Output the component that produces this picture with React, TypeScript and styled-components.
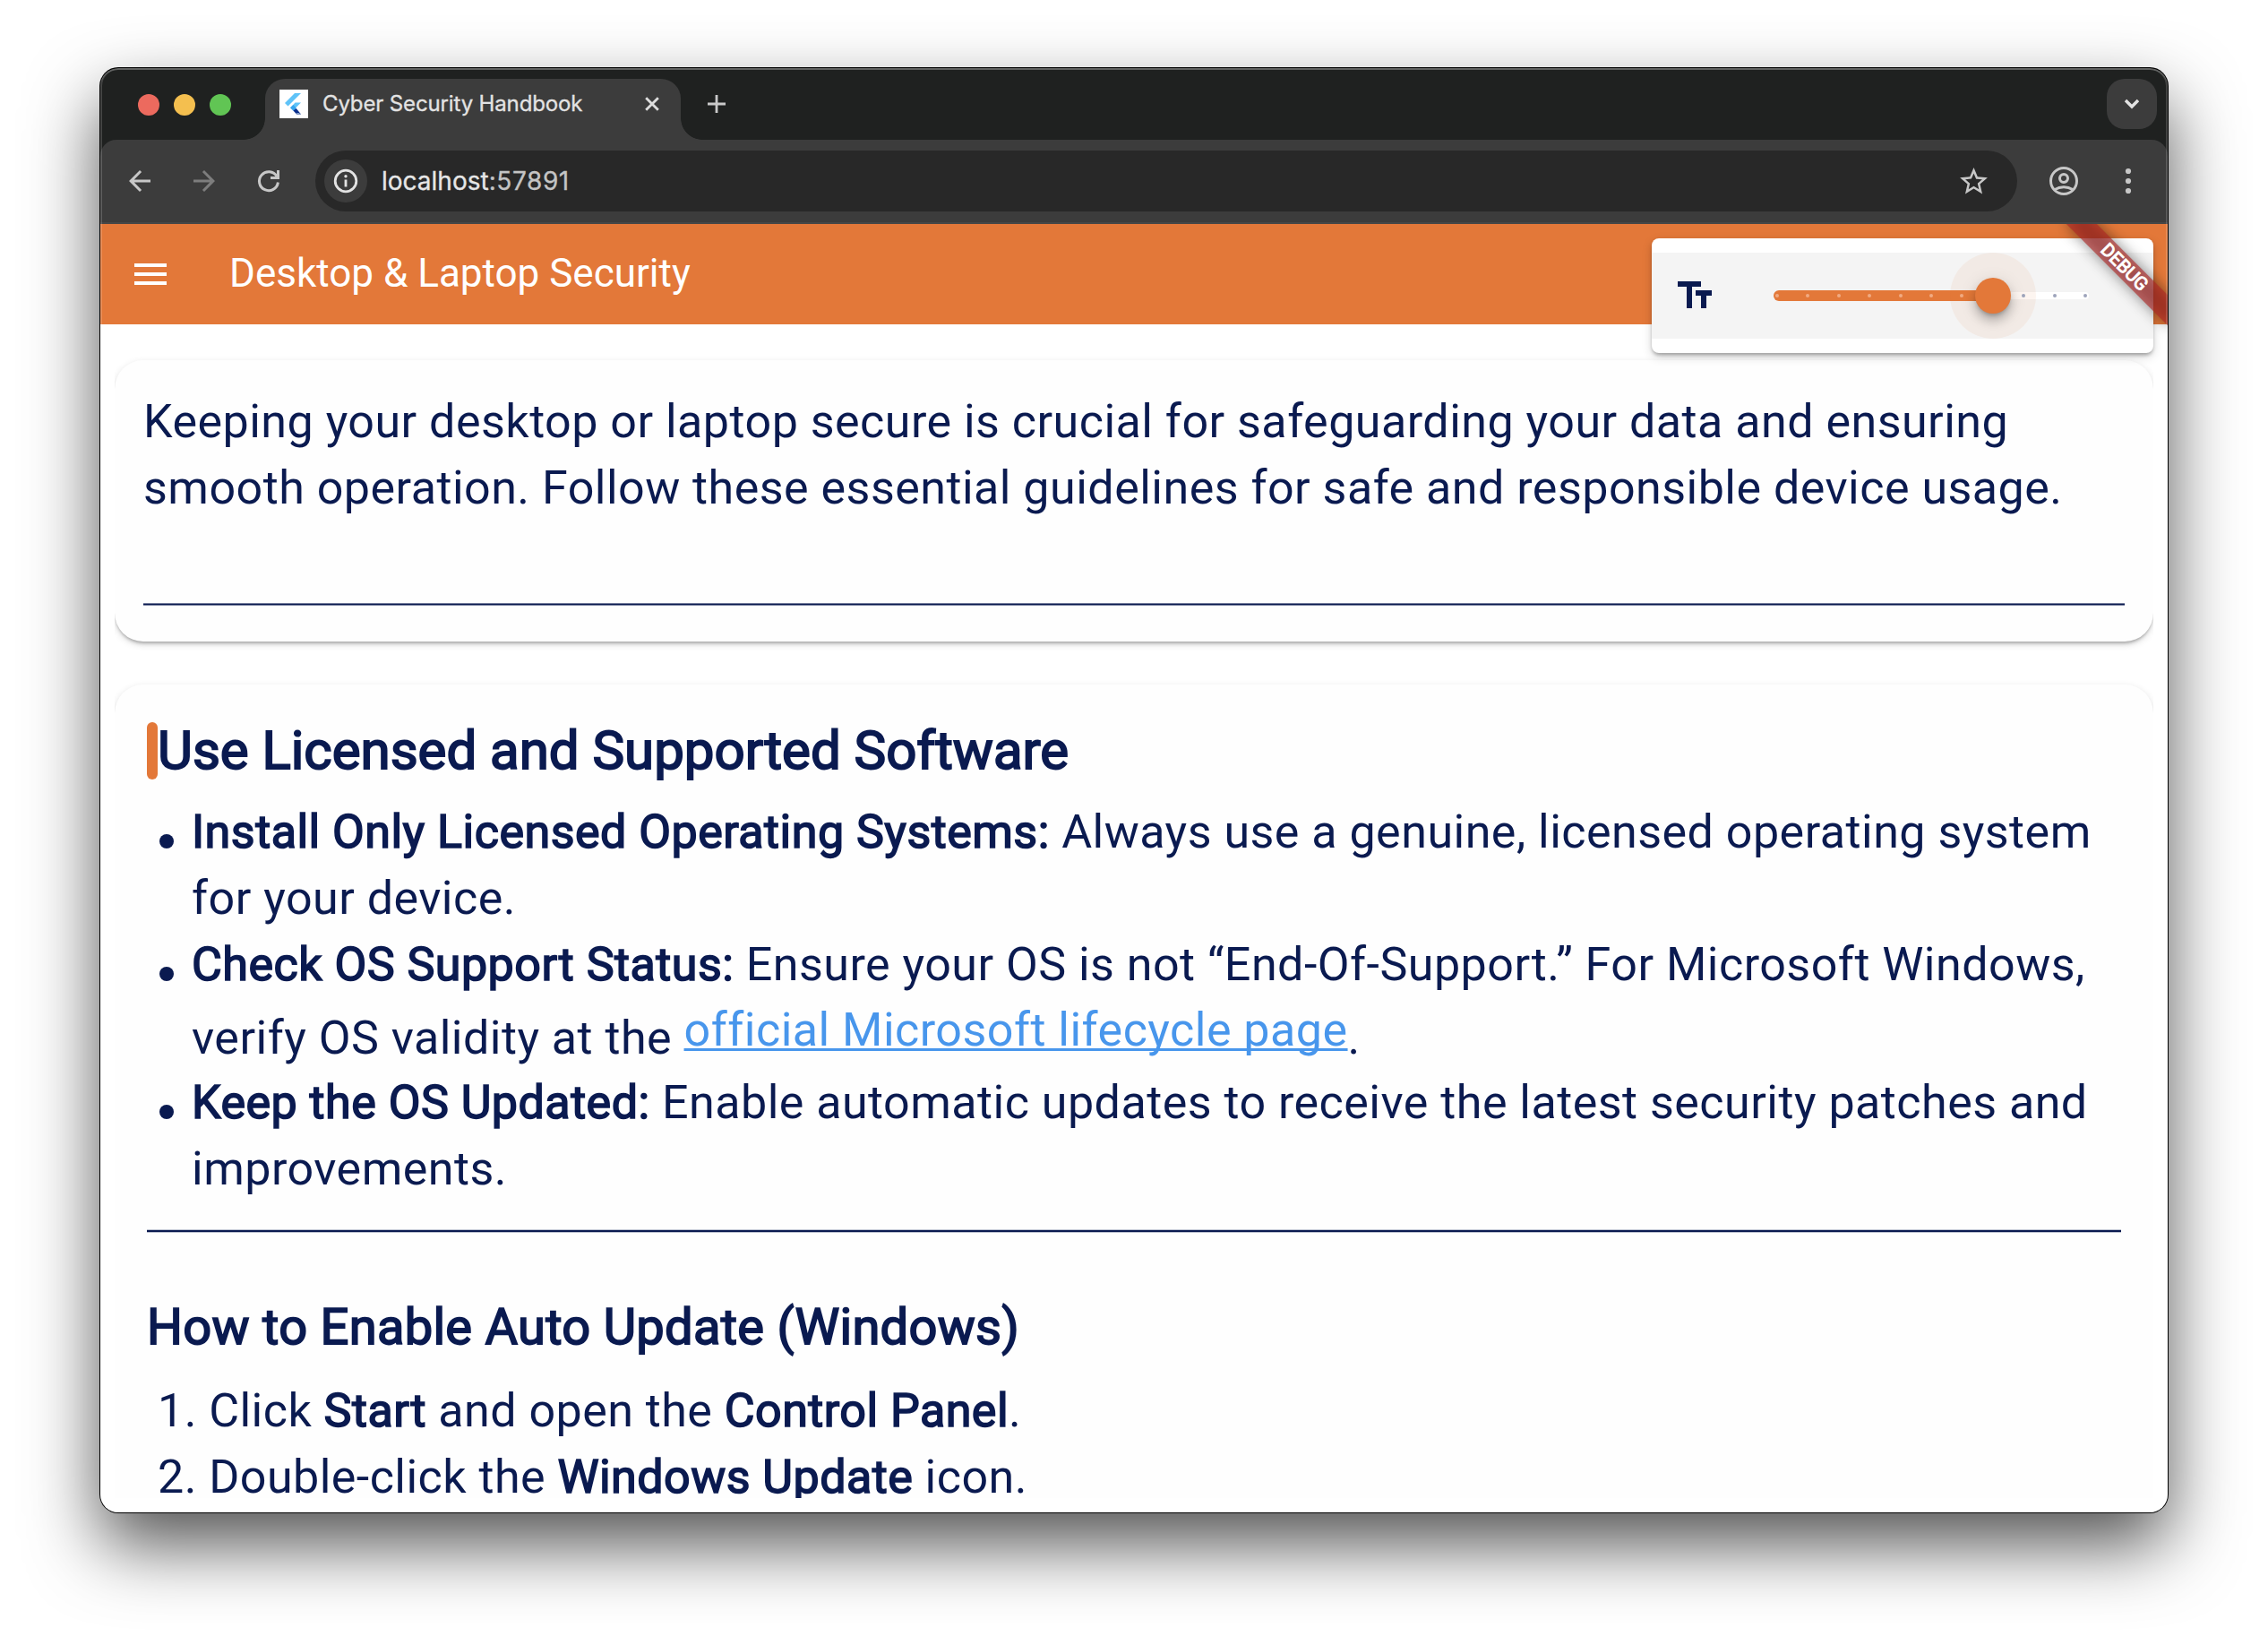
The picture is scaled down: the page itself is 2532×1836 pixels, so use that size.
import React from 'react';
import styled, { createGlobalStyle } from 'styled-components';

const navy = '#0a1a50';
const orange = '#e37839';
const chrome = '#3c3c3c';

const GlobalStyle = createGlobalStyle`
  * { box-sizing: border-box; }
  body {
    margin: 0;
    background: #fff;
    -webkit-font-smoothing: antialiased;
  }
`;

const Desktop = styled.main`
  width: 2532px;
  height: 1836px;
  padding: 76px 112px 148px;
  overflow: hidden;
`;

const Window = styled.div`
  position: relative;
  display: flex;
  flex-direction: column;
  height: 1612px;
  border-radius: 20px;
  background: #1f2120;
  box-shadow: 0 0 0 1px #000, 0 36px 80px rgba(0, 0, 0, 0.68);
  overflow: hidden;

  &::after {
    content: '';
    position: absolute;
    inset: 0;
    border-radius: 20px;
    box-shadow: inset 0 2px 0 rgba(255, 255, 255, 0.16), inset 0 0 0 2px rgba(255, 255, 255, 0.16);
    pointer-events: none;
  }
`;

/* ---------- browser chrome ---------- */

const TabStrip = styled.div`
  display: flex;
  height: 80px;
  padding: 12px 12px 0 42px;
`;

const TrafficLights = styled.div`
  display: flex;
  gap: 16px;
  padding-top: 17px;
  width: 142px;
`;

const Light = styled.span<{ $color: string }>`
  width: 24px;
  height: 24px;
  border-radius: 50%;
  background: ${(p) => p.$color};
`;

const Tab = styled.div`
  position: relative;
  display: flex;
  align-items: center;
  width: 464px;
  height: 68px;
  padding: 0 24px 12px 16px;
  border-radius: 22px 22px 0 0;
  background: ${chrome};

  &::before,
  &::after {
    content: '';
    position: absolute;
    bottom: 0;
    width: 24px;
    height: 24px;
  }
  &::before {
    right: 100%;
    background: radial-gradient(circle at 0 0, transparent 23.5px, ${chrome} 24.2px);
  }
  &::after {
    left: 100%;
    background: radial-gradient(circle at 100% 0, transparent 23.5px, ${chrome} 24.2px);
  }
`;

const TabTitle = styled.span`
  flex: 1;
  margin-left: 16px;
  font: 400 24px/32px Inter, sans-serif;
  letter-spacing: -0.14px;
  -webkit-text-stroke: 0.3px #e3e3e3;
  color: #e3e3e3;
  white-space: nowrap;
`;

const NewTab = styled.div`
  display: flex;
  margin: 18px auto 0 30px;
`;

const TabSearch = styled.div`
  display: flex;
  align-items: center;
  justify-content: center;
  width: 56px;
  height: 56px;
  border-radius: 20px;
  background: ${chrome};
`;

const ToolbarRow = styled.div`
  display: flex;
  align-items: center;
  height: 94px;
  padding: 0 26px;
  border-radius: 18px 18px 0 0;
  border-bottom: 2px solid #464646;
  background: ${chrome};
`;

const NavButtons = styled.div`
  display: flex;
  gap: 36px;
  width: 214px;
`;

const Omnibox = styled.div`
  display: flex;
  align-items: center;
  width: 1900px;
  height: 68px;
  padding: 0 30px 0 10px;
  border-radius: 34px;
  background: #282828;
`;

const SiteInfo = styled.div`
  display: flex;
  align-items: center;
  justify-content: center;
  width: 48px;
  height: 48px;
  border-radius: 50%;
  background: ${chrome};
`;

const Url = styled.span`
  flex: 1;
  margin-left: 16px;
  font: 400 28px/34px Inter, sans-serif;
  -webkit-text-stroke: 0.3px currentColor;
  color: #e6e6e6;
`;

const Port = styled.span`
  letter-spacing: 0.6px;
  color: #c4c4c4;
`;

const ToolbarActions = styled.div`
  display: flex;
  align-items: center;
  gap: 36px;
  margin-left: 34px;
`;

/* ---------- application page ---------- */

const Page = styled.div`
  position: relative;
  display: flex;
  flex-direction: column;
  flex: 1;
  min-height: 0;
  padding-bottom: 16px;
  background: #fff;
  overflow: hidden;
  font-family: Roboto, sans-serif;
  color: ${navy};
`;

const AppBar = styled.header`
  display: flex;
  align-items: center;
  gap: 64px;
  height: 112px;
  flex: none;
  padding: 0 32px;
  background: ${orange};
`;

const AppTitle = styled.h1`
  margin: 0;
  padding-bottom: 2px;
  font-size: 44px;
  font-weight: 400;
  line-height: 56px;
  color: #fff;
`;

const Scroll = styled.div`
  flex: 1;
  min-height: 0;
  margin: 0 16px;
  padding-top: 40px;
  overflow: hidden;
`;

const Card = styled.section<{ $inset: number }>`
  padding: ${(p) => (p.$inset === 32 ? '32px 32px 40px' : '42px 36px 40px')};
  margin-bottom: 48px;
  border-radius: 32px;
  background: #fefefe;
  box-shadow: 0 4px 4px -2px rgba(0, 0, 0, 0.2), 0 2px 2px rgba(0, 0, 0, 0.08), 0 3px 8px rgba(0, 0, 0, 0.14);
`;

const Line = styled.span<{ $raised?: boolean }>`
  display: block;
  line-height: 74px;
  white-space: nowrap;
  margin-bottom: ${(p) => (p.$raised ? '-2px' : '0')};
`;

const Body = styled.div`
  font-size: 52px;
  letter-spacing: 0.482px;
`;

const IntroRule = styled.hr`
  height: 3px;
  margin: 91px 0 0;
  border: solid #747d9b;
  border-width: 1px 0;
  background: ${navy};
`;

const SectionRule = styled.hr`
  height: 4px;
  margin: 30px 0 73px;
  border: solid #bcc1d0;
  border-width: 1px 0;
  background: ${navy};
`;

const heavy = `
  font-weight: 400;
  -webkit-text-stroke: 1.6px ${navy};
`;

const HeadingRow = styled.div`
  display: flex;
  align-items: center;
  height: 64px;
  margin-bottom: 22px;
`;

const Accent = styled.span`
  width: 12px;
  height: 64px;
  border-radius: 6px;
  background: ${orange};
`;

const SectionTitle = styled.h2`
  margin: 0;
  ${heavy}
  -webkit-text-stroke-width: 1.9px;
  font-size: 60px;
  line-height: 64px;
  letter-spacing: -0.02px;
`;

const SubTitle = styled.h3`
  margin: 0 0 25px;
  ${heavy}
  -webkit-text-stroke-width: 1.75px;
  font-size: 56px;
  line-height: 64px;
  letter-spacing: 0.3px;
`;

const Strong = styled.strong`
  ${heavy}
`;

const List = styled.ul`
  margin: 0;
  padding: 0;
  list-style: none;
  font-size: 52px;
  letter-spacing: 0.482px;
`;

const Item = styled.li`
  display: flex;
  padding-left: 14px;
  gap: 20px;
`;

const Dot = styled.span`
  flex: none;
  width: 16px;
  height: 16px;
  margin-top: 39px;
  border-radius: 50%;
  background: ${navy};
`;

const Steps = styled.div`
  padding-left: 12px;
  font-size: 52px;
  letter-spacing: 0.46px;
`;

const Link = styled.a`
  position: relative;
  top: -1px;
  display: inline-block;
  vertical-align: 8px;
  line-height: 74px;
  color: #4896ec;
  text-decoration: underline;
  text-decoration-thickness: 3px;
  text-underline-offset: 3px;
  text-decoration-skip-ink: none;
`;

/* ---------- text size popup ---------- */

const Popup = styled.div`
  position: absolute;
  top: 16px;
  right: 16px;
  width: 560px;
  height: 128px;
  padding: 16px 0;
  border-radius: 8px;
  background: #fff;
  box-shadow: 0 4px 4px -2px rgba(0, 0, 0, 0.22), 0 2px 4px rgba(0, 0, 0, 0.12), 0 4px 12px rgba(0, 0, 0, 0.16);
`;

const PopupRow = styled.div`
  display: flex;
  align-items: center;
  height: 96px;
  padding-left: 24px;
  gap: 64px;
  background: #f4f4f4;
`;

const Slider = styled.div`
  position: relative;
  display: flex;
  align-items: center;
  width: 352px;
  height: 96px;
`;

const ActiveTrack = styled.div`
  width: 245px;
  height: 12px;
  border-radius: 6px 0 0 6px;
  background: ${orange};
`;

const RestTrack = styled.div`
  flex: 1;
  height: 8px;
  border-radius: 0 4px 4px 0;
  background: #fff;
`;

const Halo = styled.div`
  position: absolute;
  left: 197px;
  top: 0;
  width: 96px;
  height: 96px;
  border-radius: 50%;
  background: rgba(227, 120, 57, 0.075);
`;

const Ticks = styled.div`
  position: absolute;
  inset: 46px 2px;
  display: flex;
  justify-content: space-between;
`;

const Tick = styled.span<{ $on: boolean }>`
  width: 4px;
  height: 4px;
  border-radius: 50%;
  background: ${(p) => (p.$on ? '#f1ab82' : '#9ea4bb')};
`;

const Thumb = styled.div`
  position: absolute;
  left: 224.5px;
  top: 28px;
  width: 40px;
  height: 40px;
  border-radius: 50%;
  background: ${orange};
  box-shadow: 0 4px 4px -2px rgba(0, 0, 0, 0.2), 0 8px 12px rgba(0, 0, 0, 0.2), 0 4px 20px rgba(0, 0, 0, 0.12);
`;

const Banner = styled.div`
  position: absolute;
  top: 56px;
  right: -80px;
  width: 160px;
  height: 24px;
  transform-origin: 80px -56px;
  transform: rotate(45deg);

  &::before,
  &::after {
    content: '';
    position: absolute;
    inset: 0;
  }
  &::before {
    background: rgba(0, 0, 0, 0.45);
    filter: blur(8px);
  }
  &::after {
    background: rgba(174, 38, 36, 0.627);
  }
`;

const BannerText = styled.span`
  position: relative;
  z-index: 1;
  display: block;
  font-size: 20.4px;
  line-height: 24px;
  text-align: center;
  color: #fff;
  -webkit-text-stroke: 1px #fff;
`;

/* ---------- icons ---------- */

const Glyph = styled.svg`
  flex: none;
`;

const MaterialIcon = ({ size, color, d }: { size: number; color: string; d: string }) => (
  <Glyph width={size} height={size} viewBox="0 0 24 24" fill={color}>
    <path d={d} />
  </Glyph>
);

const FlutterIcon = () => (
  <Glyph width="32" height="32" viewBox="0 0 32 32">
    <rect width="32" height="32" fill="#fff" />
    <path d="M17 4h7L9.500 18.500 6 15z" fill="#5fc3f8" />
    <path d="M17.500 14.500H24l-6.200 6.300 2.600 2.700-3.200 0-5-3.200z" fill="#5fc3f8" />
    <path d="M12 20.300l3.300-3.200 3.400 3.400-3.300 3.200z" fill="#35a5ee" />
    <path d="M15.400 23.600l3.300-2.600 5.300 6.600h-4.800z" fill="#0b2f8c" />
    <path d="M19 26l3 0 2 1.800h-4.600z" fill="#7f97c4" />
  </Glyph>
);

const CloseIcon = () => (
  <Glyph width="16" height="16" viewBox="0 0 16 16" stroke="#dedede" strokeWidth="2.8" fill="none">
    <path d="M1.200 1.200l13.600 13.600M14.800 1.200L1.200 14.800" />
  </Glyph>
);

const PlusIcon = () => (
  <Glyph width="20" height="20" viewBox="0 0 20 20" stroke="#c9c9c9" strokeWidth="2.8" fill="none">
    <path d="M10 0v20M0 10h20" />
  </Glyph>
);

const ChevronIcon = () => (
  <Glyph width="20" height="12" viewBox="0 0 20 12" stroke="#e3e3e3" strokeWidth="3.4" fill="none">
    <path d="M3 2l7 7 7-7" />
  </Glyph>
);

const ReloadIcon = () => (
  <Glyph width="36" height="36" viewBox="0 0 36 36" stroke="#c7c7c7" strokeWidth="3" fill="none">
    <path d="M28.400 19.500A10.500 10.500 0 1 1 27 12.800" />
    <path d="M28.500 6v8.500H20" />
  </Glyph>
);

const InfoIcon = () => (
  <Glyph width="28" height="28" viewBox="0 0 28 28" fill="none">
    <circle cx="14" cy="14" r="11.8" stroke="#e3e3e3" strokeWidth="2.8" />
    <path d="M14 12.500v8" stroke="#e3e3e3" strokeWidth="2.8" />
    <circle cx="14" cy="8.7" r="1.7" fill="#e3e3e3" />
  </Glyph>
);

const AccountIcon = () => (
  <Glyph width="36" height="36" viewBox="-18 -18 36 36" stroke="#c7c7c7" strokeWidth="3" fill="none">
    <circle r="14.5" />
    <circle cy="-3" r="4.5" />
    <path d="M-10.500 9.800Q0 3.800 10.500 9.800" />
  </Glyph>
);

const MoreIcon = () => (
  <Glyph width="36" height="36" viewBox="0 0 36 36" fill="#c7c7c7">
    <circle cx="18" cy="7" r="3.1" />
    <circle cx="18" cy="18" r="3.1" />
    <circle cx="18" cy="29" r="3.1" />
  </Glyph>
);

const paths = {
  back: 'M20 11H7.830l5.590-5.590L12 4l-8 8 8 8 1.410-1.410L7.830 13H20v-2z',
  forward: 'M12 4l-1.410 1.410L16.170 11H4v2h12.170l-5.580 5.590L12 20l8-8z',
  star: 'M22 9.240l-7.190-.62L12 2 9.190 8.630 2 9.240l5.460 4.730L5.820 21 12 17.270 18.180 21l-1.630-7.030L22 9.240zM12 15.400l-3.760 2.270 1-4.280-3.320-2.880 4.380-.38L12 6.100l1.710 4.040 4.380.38-3.320 2.880 1 4.280L12 15.400z',
  menu: 'M3 18h18v-2H3v2zm0-5h18v-2H3v2zm0-7v2h18V6H3z',
  textFields: 'M2.500 4v3h5v12h3V7h5V4h-13zm19 5h-9v3h3v7h3v-7h3V9z',
};

const ticks = Array.from({ length: 11 }, (_, i) => i);

export default function App() {
  return (
    <Desktop>
      <GlobalStyle />
      <Window>
        <TabStrip>
          <TrafficLights>
            <Light $color="#ec6a5e" />
            <Light $color="#f4bf4f" />
            <Light $color="#61c554" />
          </TrafficLights>
          <Tab>
            <FlutterIcon />
            <TabTitle>Cyber Security Handbook</TabTitle>
            <CloseIcon />
          </Tab>
          <NewTab>
            <PlusIcon />
          </NewTab>
          <TabSearch>
            <ChevronIcon />
          </TabSearch>
        </TabStrip>

        <ToolbarRow>
          <NavButtons>
            <MaterialIcon size={36} color="#c7c7c7" d={paths.back} />
            <MaterialIcon size={36} color="#7d7d7d" d={paths.forward} />
            <ReloadIcon />
          </NavButtons>
          <Omnibox>
            <SiteInfo>
              <InfoIcon />
            </SiteInfo>
            <Url>
              localhost<Port>:57891</Port>
            </Url>
            <MaterialIcon size={37} color="#c7c7c7" d={paths.star} />
          </Omnibox>
          <ToolbarActions>
            <AccountIcon />
            <MoreIcon />
          </ToolbarActions>
        </ToolbarRow>

        <Page>
          <AppBar>
            <MaterialIcon size={48} color="#fff" d={paths.menu} />
            <AppTitle>Desktop &amp; Laptop Security</AppTitle>
          </AppBar>

          <Scroll>
            <Card $inset={32}>
              <Body>
                <Line>Keeping your desktop or laptop secure is crucial for safeguarding your data and ensuring</Line>
                <Line>smooth operation. Follow these essential guidelines for safe and responsible device usage.</Line>
              </Body>
              <IntroRule />
            </Card>

            <Card $inset={36}>
              <HeadingRow>
                <Accent />
                <SectionTitle>Use Licensed and Supported Software</SectionTitle>
              </HeadingRow>
              <List>
                <Item>
                  <Dot />
                  <div>
                    <Line>
                      <Strong>Install Only Licensed Operating Systems:</Strong> Always use a genuine, licensed operating system
                    </Line>
                    <Line>for your device.</Line>
                  </div>
                </Item>
                <Item>
                  <Dot />
                  <div>
                    <Line>
                      <Strong>Check OS Support Status:</Strong> Ensure your OS is not “End-Of-Support.” For Microsoft Windows,
                    </Line>
                    <Line $raised>
                      verify OS validity at the <Link>official Microsoft lifecycle page</Link>.
                    </Line>
                  </div>
                </Item>
                <Item>
                  <Dot />
                  <div>
                    <Line>
                      <Strong>Keep the OS Updated:</Strong> Enable automatic updates to receive the latest security patches and
                    </Line>
                    <Line>improvements.</Line>
                  </div>
                </Item>
              </List>
              <SectionRule />
              <SubTitle>How to Enable Auto Update (Windows)</SubTitle>
              <Steps>
                <Line>
                  1. Click <Strong>Start</Strong> and open the <Strong>Control Panel</Strong>.
                </Line>
                <Line>
                  2. Double-click the <Strong>Windows Update</Strong> icon.
                </Line>
              </Steps>
            </Card>
          </Scroll>

          <Popup>
            <PopupRow>
              <MaterialIcon size={48} color={navy} d={paths.textFields} />
              <Slider>
                <ActiveTrack />
                <RestTrack />
                <Halo />
                <Ticks>
                  {ticks.map((i) => (
                    <Tick key={i} $on={i < 7} />
                  ))}
                </Ticks>
                <Thumb />
              </Slider>
            </PopupRow>
          </Popup>

          <Banner>
            <BannerText>DEBUG</BannerText>
          </Banner>
        </Page>
      </Window>
    </Desktop>
  );
}
